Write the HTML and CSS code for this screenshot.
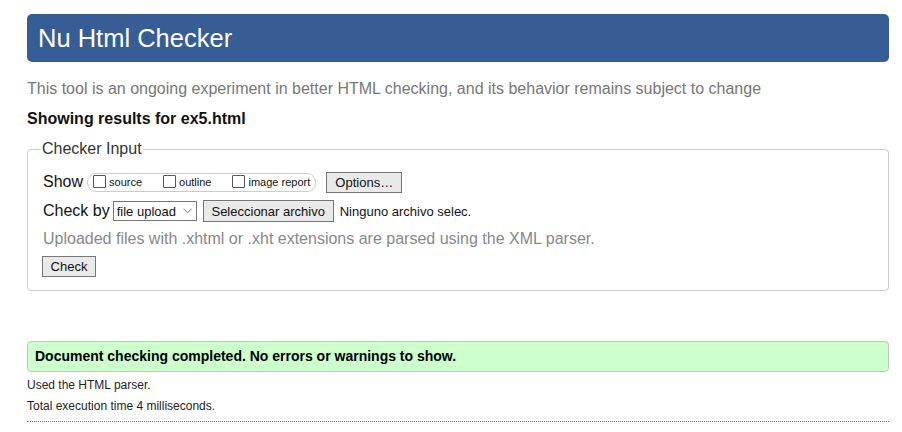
FILE: index.html
```html
<!DOCTYPE html>
<html>
<head>
<meta charset="utf-8">
<link rel="stylesheet" href="styles.css">
</head>
<body>
<div class="page">
  <h1 class="header">Nu Html Checker</h1>
  <p class="intro">This tool is an ongoing experiment in better HTML checking, and its behavior remains subject to change</p>
  <p class="showing">Showing results for ex5.html</p>
  <fieldset class="checker">
    <legend>Checker Input</legend>
    <div class="row row-show">
      <span class="lbl">Show</span>
      <span class="pill">
        <label class="opt"><span class="cb"></span>source</label>
        <label class="opt"><span class="cb"></span>outline</label>
        <label class="opt"><span class="cb"></span>image report</label>
      </span>
      <span class="btn btn-options">Options…</span>
    </div>
    <div class="row row-check">
      <span class="lbl">Check by</span>
      <span class="select">file upload<svg class="chev" width="9" height="6" viewBox="0 0 9 6"><path d="M0.5 0.8 L4.5 4.8 L8.5 0.8" fill="none" stroke="#777" stroke-width="1"/></svg></span>
      <span class="btn btn-file">Seleccionar archivo</span>
      <span class="nofile">Ninguno archivo selec.</span>
    </div>
    <p class="hint">Uploaded files with .xhtml or .xht extensions are parsed using the XML parser.</p>
    <span class="btn btn-check">Check</span>
  </fieldset>
  <div class="success">Document checking completed. No errors or warnings to show.</div>
  <p class="meta meta-first">Used the HTML parser.</p>
  <p class="meta">Total execution time 4 milliseconds.</p>
  <div class="rule"></div>
</div>
</body>
</html>
```
FILE: styles.css
```css
* { box-sizing: border-box; }
html, body { margin: 0; padding: 0; background: #fff; }
body { font-family: "Liberation Sans", Arial, sans-serif; color: #111; }
.page { padding: 14px 13px 0 27px; }
.header {
  margin: 0;
  height: 48px;
  background: #365d95;
  color: #fff;
  font-weight: normal;
  font-size: 25.5px;
  line-height: 48px;
  padding-left: 11px;
  border-radius: 5px;
}
.intro {
  margin: 17px 0 0 0;
  font-size: 16px;
  line-height: 20px;
  color: #777;
}
.showing {
  margin: 10px 0 0 0;
  font-size: 16px;
  line-height: 20px;
  font-weight: bold;
  color: #111;
}
.checker {
  margin: 11px 0 0 0;
  border: 1px solid #ccc;
  border-radius: 4px;
  padding: 13px 15px 13px 15px;
  min-width: 0;
}
.checker legend {
  font-size: 16px;
  color: #333;
  padding: 0 1px;
  margin-left: -2px;
  line-height: 18px;
}
.row { display: flex; align-items: center; height: 22px; white-space: nowrap; }
.row-check { margin-top: 7px; }
.lbl { font-size: 16px; color: #111; }
.pill {
  display: flex;
  align-items: center;
  margin-left: 4px;
  height: 19px;
  border: 1px solid #ccc;
  border-radius: 9px;
  padding: 0 5px 0 5px;
}
.opt {
  display: flex;
  align-items: center;
  font-size: 11px;
  color: #111;
  margin-right: 21px;
}
.opt:last-child { margin-right: 0; }
.cb {
  display: inline-block;
  width: 13px;
  height: 13px;
  border: 1px solid #555;
  border-radius: 1px;
  margin: 0 3px 2px 0;
  background: #fff;
}
.btn {
  display: inline-flex;
  align-items: center;
  justify-content: center;
  font-size: 13px;
  color: #111;
  background: #e9e9e9;
  border: 1px solid #767676;
  border-radius: 0;
  height: 21px;
  padding: 0 6px;
  white-space: nowrap;
}
.btn-options { margin-left: 10px; width: 76px; }
.select {
  display: inline-flex;
  align-items: center;
  justify-content: space-between;
  margin-left: 3px;
  height: 20px;
  width: 84px;
  border: 1px solid #767676;
  font-size: 13px;
  padding: 0 4px 0 3px;
  background: #fff;
  white-space: nowrap;
}
.chev { margin-left: 4px; }
.btn-file { margin-left: 6px; width: 131px; height: 22px; }
.nofile { font-size: 13px; margin-left: 6px; color: #111; }
.hint {
  margin: 7px 0 0 0;
  font-size: 16px;
  line-height: 20px;
  color: #888;
}
.btn-check { margin-top: 7px; margin-left: -1px; width: 54px; height: 21px; }
.success {
  margin-top: 50px;
  height: 31px;
  background: #ccffcc;
  border: 1px solid #c3c3c3;
  border-radius: 4px;
  font-weight: bold;
  font-size: 14px;
  line-height: 29px;
  padding-left: 7px;
  color: #000;
}
.meta {
  margin: 0;
  font-size: 12px;
  line-height: 21px;
  color: #222;
}
.meta-first { margin-top: 3px; }
.rule { margin-top: 4px; border-top: 1px dotted #777; }
```
